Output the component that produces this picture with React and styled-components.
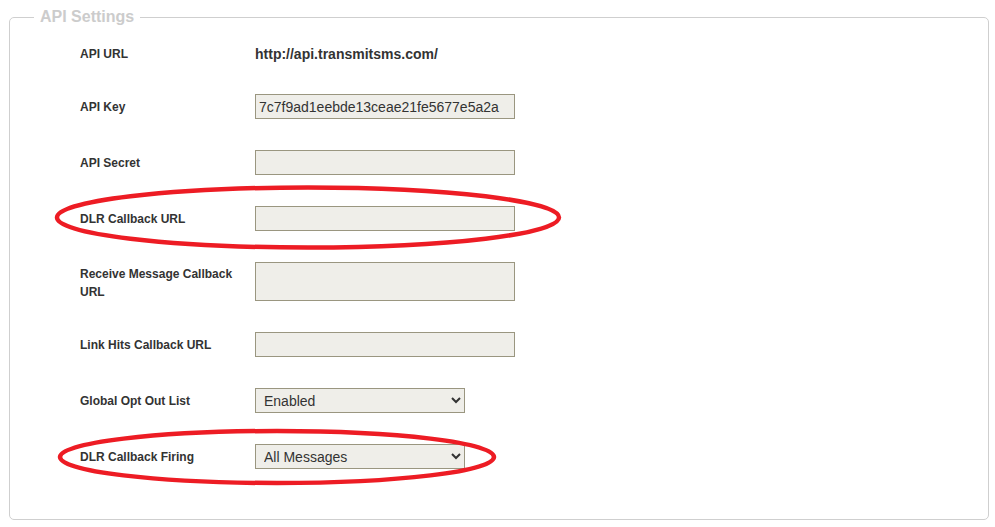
import React from "react";
import styled, { createGlobalStyle } from "styled-components";

const GlobalStyle = createGlobalStyle`
  html, body {
    margin: 0;
    padding: 0;
    background: #fff;
  }
  body {
    font-family: "Liberation Sans", Arial, sans-serif;
    color: #333;
  }
`;

const Page = styled.div`
  position: relative;
  width: 995px;
  height: 527px;
  padding: 8px 6px 0 9px;
  box-sizing: border-box;
  overflow: hidden;
`;

const Fieldset = styled.fieldset`
  margin: 0;
  height: 512px;
  box-sizing: border-box;
  border: 1px solid #cfcfcf;
  border-radius: 5px;
  padding: 0;
`;

const Legend = styled.legend`
  margin-left: 24px;
  padding: 0 6px;
  font-size: 16px;
  font-weight: bold;
  color: #cccccc;
`;

const Form = styled.div`
  display: grid;
  grid-template-columns: 175px 1fr;
  row-gap: 31px;
  align-items: center;
  padding: 19px 0 0 70px;
`;

const Label = styled.div`
  font-size: 12px;
  font-weight: bold;
  line-height: 18px;
  color: #333;
  padding-right: 15px;
  ${(p) => p.$top && "align-self: start; padding-top: 3px;"}
`;

const Value = styled.div`
  font-size: 14px;
  font-weight: bold;
  line-height: 16px;
  color: #333;
`;

const fieldLook = `
  box-sizing: border-box;
  height: 25px;
  margin: 0;
  border: 1px solid #9a9680;
  border-radius: 0;
  background: #efeee9;
  font-family: "Liberation Sans", Arial, sans-serif;
  font-size: 14px;
  color: #333;
  outline: none;
`;

const Input = styled.input`
  ${fieldLook}
  width: 260px;
  padding: 0 3px;
`;

const TextArea = styled.textarea`
  ${fieldLook}
  display: block;
  width: 260px;
  height: 39px;
  padding: 2px 3px;
  resize: none;
`;

const Select = styled.select`
  ${fieldLook}
  width: 210px;
  padding: 0 4px;
`;

const Marks = styled.svg`
  position: absolute;
  left: 0;
  top: 0;
  pointer-events: none;
`;

const rows = [
  { label: "API URL", kind: "text", value: "http://api.transmitsms.com/" },
  { label: "API Key", kind: "input", value: "7c7f9ad1eebde13ceae21fe5677e5a2a" },
  { label: "API Secret", kind: "input", value: "" },
  { label: "DLR Callback URL", kind: "input", value: "" },
  { label: "Receive Message Callback URL", kind: "area", value: "" },
  { label: "Link Hits Callback URL", kind: "input", value: "" },
  { label: "Global Opt Out List", kind: "select", value: "Enabled", options: ["Enabled", "Disabled"] },
  { label: "DLR Callback Firing", kind: "select", value: "All Messages", options: ["All Messages", "Failed Only"] },
];

function Field({ row }) {
  if (row.kind === "text") return <Value>{row.value}</Value>;
  if (row.kind === "area") return <div><TextArea defaultValue={row.value} /></div>;
  if (row.kind === "select")
    return (
      <div>
        <Select defaultValue={row.value}>
          {row.options.map((o) => (
            <option key={o}>{o}</option>
          ))}
        </Select>
      </div>
    );
  return <div><Input type="text" defaultValue={row.value} /></div>;
}

export default function App() {
  return (
    <>
      <GlobalStyle />
      <Page>
        <Fieldset>
          <Legend>API Settings</Legend>
          <Form>
            {rows.map((row) => (
              <React.Fragment key={row.label}>
                <Label $top={row.kind === "area"}>{row.label}</Label>
                <Field row={row} />
              </React.Fragment>
            ))}
          </Form>
        </Fieldset>
        {/* red hand-drawn annotations */}
        <Marks width="995" height="527" viewBox="0 0 995 527">
          <ellipse cx="308" cy="217.5" rx="251" ry="30" fill="none" stroke="#ed1c24" strokeWidth="4.5" />
          <ellipse cx="277" cy="457" rx="217" ry="26" fill="none" stroke="#ed1c24" strokeWidth="4.5" />
        </Marks>
      </Page>
    </>
  );
}
